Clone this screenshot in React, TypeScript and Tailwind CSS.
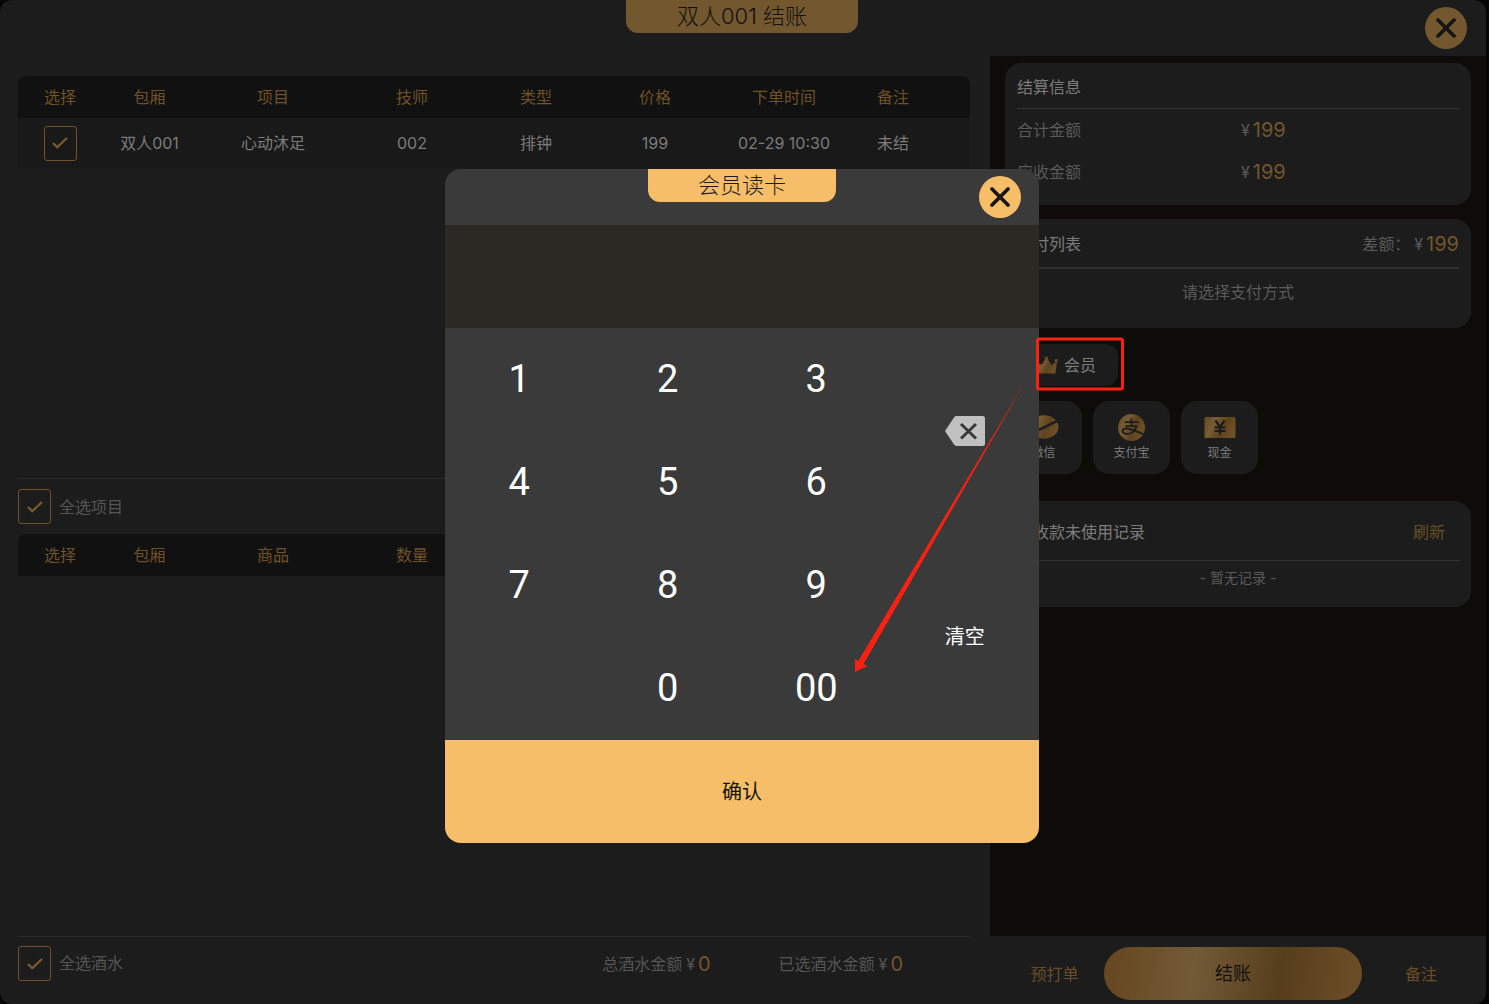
import type React from "react";

const orderColumns = ["选择", "包厢", "项目", "技师", "类型", "价格", "下单时间", "备注"];
const drinkColumns = ["选择", "包厢", "商品", "数量"];
const orders = [
  {
    id: 1,
    cells: ["双人001", "心动沐足", "002", "排钟", "199", "02-29 10:30", "未结"],
  },
];

const ColumnWidths: React.FC = () => (
  <colgroup>
    <col className="w-[84px]" />
    <col className="w-[95px]" />
    <col className="w-[152px]" />
    <col className="w-[126px]" />
    <col className="w-[122px]" />
    <col className="w-[116px]" />
    <col className="w-[142px]" />
    <col className="w-[76px]" />
    <col className="w-[39px]" />
  </colgroup>
);

const CheckBox: React.FC<{ id: string; label?: string }> = ({ id, label }) => (
  <span className="inline-grid h-[35px] w-[33px] place-items-center align-middle">
    <input
      id={id}
      type="checkbox"
      defaultChecked
      aria-label={label}
      className="peer col-start-1 row-start-1 h-full w-full appearance-none rounded-[3px] border border-[#6f5228]"
    />
    <svg
      viewBox="0 0 16 12"
      className="pointer-events-none invisible col-start-1 row-start-1 h-3 w-4 peer-checked:visible"
    >
      <path d="M1 6 5.2 10.2 15 1" fill="none" stroke="#7c5c2e" strokeWidth="2.2" />
    </svg>
  </span>
);

const CloseButton: React.FC<{ className: string }> = ({ className }) => (
  <button
    type="button"
    aria-label="关闭"
    className={`absolute flex size-[42px] items-center justify-center rounded-full ${className}`}
  >
    <svg viewBox="0 0 20 20" className="size-5">
      <path d="M2 2 18 18M18 2 2 18" stroke="#161616" strokeWidth="3.7" strokeLinecap="round" />
    </svg>
  </button>
);

const Amount: React.FC<{ value: string }> = ({ value }) => (
  <span className="flex items-center gap-[3px]">
    <span>¥</span>
    <span className="text-xl text-[#72562d]">{value}</span>
  </span>
);

// Dégradé doré partagé par les icônes de paiement
const GoldGradient: React.FC = () => (
  <svg className="absolute size-0" aria-hidden="true">
    <defs>
      <linearGradient id="gold" x1="0" y1="0" x2="1" y2="0.35">
        <stop offset="0" stopColor="#664922" />
        <stop offset="0.35" stopColor="#775c36" />
        <stop offset="0.7" stopColor="#5f431d" />
        <stop offset="1" stopColor="#6d4f27" />
      </linearGradient>
    </defs>
  </svg>
);

const CrownIcon: React.FC = () => (
  <svg viewBox="0 0 23 18" className="h-[18px] w-[23px]" fill="url(#gold)">
    <path d="M2.5 17.6 1 5.2 6.5 9 10.4 3H12.6L16.5 9 22 5.2 20.5 17.6Z" />
    <circle cx="11.5" cy="2" r="1.6" />
    <circle cx="21.3" cy="4.6" r="1.6" />
    <circle cx="1.7" cy="4.6" r="1.6" />
  </svg>
);

const WechatPayIcon: React.FC = () => (
  <svg viewBox="0 0 30 27" className="h-[27px] w-[30px]">
    <path d="M5 18 4 26 11 23Z" fill="url(#gold)" />
    <ellipse cx="15" cy="13" rx="14.5" ry="11.8" fill="url(#gold)" />
    <path d="M6.5 11 9.5 16.2 29 6.6" fill="none" stroke="#1c1c1c" strokeWidth="2.4" />
  </svg>
);

const AlipayIcon: React.FC = () => (
  <svg viewBox="0 0 80 80" className="size-[27px]">
    <circle cx="40" cy="40" r="40" fill="url(#gold)" />
    <path
      d="M20 24H61M40 14V36M22 36H55C51 49 40 60 25 59C10 57 10 45 22 43C34 41 52 51 80 62"
      fill="none"
      stroke="#1c1c1c"
      strokeWidth="5.5"
    />
  </svg>
);

const CashIcon: React.FC = () => (
  <svg viewBox="0 0 32 22" className="h-[27px] w-8">
    <rect x="0.5" y="0.5" width="31" height="21" rx="1" fill="url(#gold)" />
    <path
      d="M11.5 4 16 10.5 20.5 4M16 10.5V18M10.5 11H21.5M10.5 14.5H21.5"
      fill="none"
      stroke="#1c1c1c"
      strokeWidth="2.2"
    />
  </svg>
);

const methods = [
  { name: "微信", icon: <WechatPayIcon /> },
  { name: "支付宝", icon: <AlipayIcon /> },
  { name: "现金", icon: <CashIcon /> },
];

const Key: React.FC<{ value: string }> = ({ value }) => (
  <button type="button" className="font-['Roboto',sans-serif] text-[38px]">
    {value}
  </button>
);

const CardReader: React.FC = () => (
  <div
    role="dialog"
    aria-labelledby="reader-title"
    className="relative w-[594px] rounded-2xl bg-[#3a3a3a] text-white"
  >
    <div className="flex h-14 items-start justify-center">
      <h2
        id="reader-title"
        className="flex h-[33px] w-[188px] items-center justify-center rounded-b-xl bg-[#f6be68] text-[22px] font-light text-[#1c1c1c]"
      >
        会员读卡
      </h2>
      <CloseButton className="right-[18px] top-[7px] bg-[#f6be68]" />
    </div>
    <input
      type="text"
      aria-label="会员卡号"
      className="block h-[103px] w-full bg-[#2a2924] px-6 text-4xl outline-none"
    />
    <div className="grid auto-rows-[103px] grid-cols-4">
      <Key value="1" />
      <Key value="2" />
      <Key value="3" />
      <button type="button" aria-label="删除" className="row-span-2 flex items-center justify-center">
        <svg viewBox="0 0 40 30" className="h-[30px] w-10">
          <path
            d="M0 15 9 1.4Q10 0 11.5 0H37.5Q40 0 40 2.5V27.5Q40 30 37.5 30H11.5Q10 30 9 28.6Z"
            fill="#c0c0c0"
          />
          <path d="M16 8 31 22.5M31 8 16 22.5" stroke="#3a3a3a" strokeWidth="3" />
        </svg>
      </button>
      <Key value="4" />
      <Key value="5" />
      <Key value="6" />
      <Key value="7" />
      <Key value="8" />
      <Key value="9" />
      <button type="button" className="row-span-2 text-xl">
        清空
      </button>
      <span />
      <Key value="0" />
      <Key value="00" />
    </div>
    <button type="button" className="h-[103px] w-full rounded-b-2xl bg-[#f6be68] text-xl text-[#111]">
      确认
    </button>

    {/* Repère rouge et flèche par-dessus la fenêtre */}
    <svg
      viewBox="0 0 272 338"
      className="pointer-events-none absolute left-[409px] top-[168px] h-[338px] w-[272px]"
      aria-hidden="true"
    >
      <rect x="183.5" y="2" width="85" height="50" rx="2" fill="none" stroke="#ff2012" strokeWidth="3" />
      <path d="M170 47 9.5 327 13.5 329 1 335 1 322 4.3 324Z" fill="#ff2012" />
    </svg>
  </div>
);

const App: React.FC = () => {
  return (
    <div className="h-screen bg-[#050505] pr-[3px] font-['Inter','Noto_Sans_CJK_SC',sans-serif] text-base text-[#7c7c7c]">
      <GoldGradient />
      <main className="relative flex h-full flex-col overflow-hidden rounded-xl bg-[#1c1c1c]">
        <header className="flex h-14 shrink-0 items-start justify-center pr-[2px]">
          <h1 className="flex h-[33px] w-[232px] items-center justify-center rounded-b-xl bg-[#72572f] text-[22px] font-light text-[#111]">
            双人001 结账
          </h1>
          <CloseButton className="right-[19px] top-[7px] bg-[#72572f]" />
        </header>

        <div className="flex min-h-0 flex-1">
          {/* Commandes et boissons */}
          <section className="flex flex-1 flex-col pl-[18px] pr-5 pt-5">
            <div className="flex-1">
              <table className="w-full table-fixed text-center">
                <ColumnWidths />
                <thead className="text-[#705227]">
                  <tr className="h-[42px]">
                    {orderColumns.map((name) => (
                      <th key={name} className="bg-[#111] font-normal first:rounded-tl-lg">
                        {name}
                      </th>
                    ))}
                    <td className="rounded-tr-lg bg-[#111]" />
                  </tr>
                </thead>
                <tbody className="bg-[#191919]">
                  {orders.map((order) => (
                    <tr key={order.id} className="h-[50px]">
                      <td>
                        <CheckBox id="order-1" label="选择" />
                      </td>
                      {order.cells.map((cell) => (
                        <td key={cell} className="whitespace-nowrap">
                          {cell}
                        </td>
                      ))}
                      <td />
                    </tr>
                  ))}
                </tbody>
              </table>
            </div>

            <div className="flex h-14 shrink-0 items-center border-t border-[#2b2b2b] text-[#555]">
              <CheckBox id="all-items" />
              <label htmlFor="all-items" className="pl-2">
                全选项目
              </label>
            </div>

            <div className="flex-1">
              <table className="w-full table-fixed text-center">
                <ColumnWidths />
                <thead className="text-[#705227]">
                  <tr className="h-[42px]">
                    {drinkColumns.map((name) => (
                      <th key={name} className="bg-[#111] font-normal first:rounded-tl-lg">
                        {name}
                      </th>
                    ))}
                    <td colSpan={5} className="rounded-tr-lg bg-[#111]" />
                  </tr>
                </thead>
              </table>
            </div>

            <div className="flex h-[68px] shrink-0 items-start border-t border-[#2b2b2b] pt-[9px] text-[#555]">
              <CheckBox id="all-drinks" />
              <label htmlFor="all-drinks" className="pl-2 leading-[35px]">
                全选酒水
              </label>
              <div className="ml-auto flex h-[35px] items-center gap-[68px] pr-[67px]">
                <span className="flex items-center gap-1">
                  总酒水金额
                  <Amount value="0" />
                </span>
                <span className="flex items-center gap-1">
                  已选酒水金额
                  <Amount value="0" />
                </span>
              </div>
            </div>
          </section>

          {/* Règlement */}
          <aside className="flex w-[496px] shrink-0 flex-col bg-[#0d0c08] text-[#5a5a5a]">
            <div className="flex-1 px-[15px] pt-[7px]">
              <section className="rounded-2xl bg-[#1c1c1c] px-3 pb-3">
                <h2 className="flex h-[46px] items-center border-b border-[#343434] pt-[2px] text-[#7c7c7c]">
                  结算信息
                </h2>
                <div className="grid h-[42px] grid-cols-2 items-center gap-[6px]">
                  <span>合计金额</span>
                  <Amount value="199" />
                </div>
                <div className="grid h-[42px] grid-cols-2 items-center gap-[6px]">
                  <span>应收金额</span>
                  <Amount value="199" />
                </div>
              </section>

              <section className="mt-[14px] rounded-2xl bg-[#1c1c1c] px-3 pb-3">
                <div className="flex h-[50px] items-center justify-between border-b-2 border-[#303030] pt-[2px]">
                  <h2 className="text-[#7c7c7c]">支付列表</h2>
                  <span className="flex items-center gap-1">
                    差额：
                    <Amount value="199" />
                  </span>
                </div>
                <p className="h-[47px] text-center leading-[47px]">请选择支付方式</p>
              </section>

              <button
                type="button"
                className="mt-4 flex h-[42px] w-[113px] items-center justify-end gap-[6px] rounded-xl bg-[#1c1c1c] pr-[22px] text-[#7c7c7c]"
              >
                <CrownIcon />
                会员
              </button>

              <div className="mt-[15px] flex gap-[11px]">
                {methods.map((method) => (
                  <button
                    key={method.name}
                    type="button"
                    className="flex h-[73px] w-[77px] flex-col items-center justify-center gap-1 rounded-2xl bg-[#1c1c1c] text-xs text-[#7c7c7c]"
                  >
                    {method.icon}
                    {method.name}
                  </button>
                ))}
              </div>

              <section className="mt-[27px] rounded-2xl bg-[#1c1c1c] px-3 pb-3">
                <div className="flex h-[60px] items-center justify-between border-b border-[#343434] pr-[14px] pt-[2px]">
                  <h2 className="text-[#7c7c7c]">已收款未使用记录</h2>
                  <button type="button" className="text-[#6a4e27]">
                    刷新
                  </button>
                </div>
                <p className="text-center text-sm leading-[34px]">- 暂无记录 -</p>
              </section>
            </div>

            <footer className="grid h-[68px] shrink-0 grid-cols-[114px_1fr_124px] items-start bg-[#1c1c1c] pt-[11px] text-[#6a4e27]">
              <button type="button" className="h-[53px] pl-[15px]">
                预打单
              </button>
              <button
                type="button"
                className="h-[53px] rounded-full bg-[linear-gradient(98deg,#664922_5%,#735a37_35%,#563d1c_68%,#6a4d26_95%)] text-lg text-[#111]"
              >
                结账
              </button>
              <button type="button" className="h-[53px] pr-[6px]">
                备注
              </button>
            </footer>
          </aside>
        </div>

        <div className="absolute inset-0 flex items-start justify-center pr-[2px] pt-[169px]">
          <CardReader />
        </div>
      </main>
    </div>
  );
};

export default App;
